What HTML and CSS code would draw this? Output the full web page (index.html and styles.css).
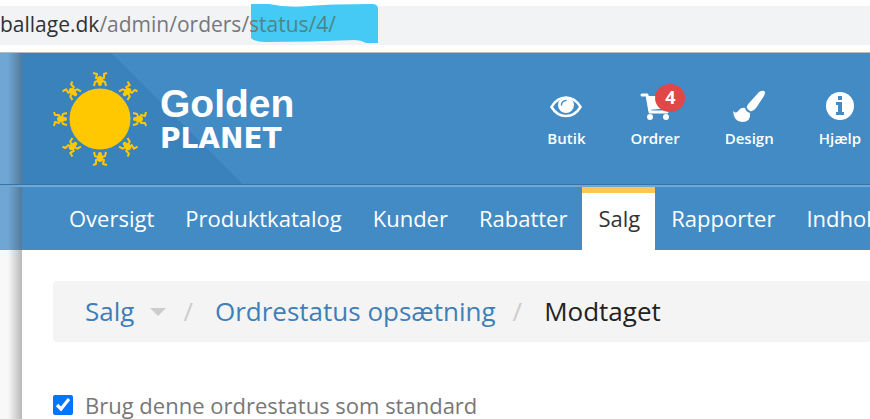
FILE: index.html
```html
<!DOCTYPE html>
<html lang="da">
	<head>
		<meta charset="utf-8">
		<title>Modtaget - Ordrestatus opsætning</title>
		<link rel="stylesheet" href="styles.css">
	</head>

	<body>
		<div class="browser">
			<div class="address">
				<svg class="marker" viewBox="0 0 127 39" width="127" height="39"><path d="M0 0H18Q36 4 58 2T121 0Q127 0 127 5V39H115Q110 36 104 36Q60 38 14 38Q4 38 0 34Z" fill="#45c9f5"/></svg>
				<span class="host">ballage.dk</span><span>/admin/orders/s</span><span class="marked">tatus/4/</span>
			</div>
		</div>

		<header class="row masthead">
			<div class="masthead-inner">
				<a class="logo" href="#">
					<svg class="sun" viewBox="-48 -48 96 96" width="96" height="96">
						<defs>
							<g id="man" fill="none" stroke="#ffc800" stroke-width="2" stroke-linejoin="round">
								<path d="M-6 -33L-5 -37L0 -39L5 -37L6 -33"/>
								<path d="M0 -40L-4 -41L-3 -45L-7 -46M0 -40L4 -41L4 -45L7 -46"/>
								<ellipse cy="-39" rx="3" ry="4" fill="#ffc800" stroke="none"/>
								<circle cy="-35" r="2" fill="#ffc800" stroke="none"/>
							</g>
						</defs>
						<circle r="30.500" fill="#ffc800"/>
						<use href="#man"/>
						<use href="#man" transform="rotate(45)"/>
						<use href="#man" transform="rotate(90)"/>
						<use href="#man" transform="rotate(135)"/>
						<use href="#man" transform="rotate(180)"/>
						<use href="#man" transform="rotate(225)"/>
						<use href="#man" transform="rotate(270)"/>
						<use href="#man" transform="rotate(315)"/>
					</svg>
					<span class="logo-text">
						<span class="golden">Golden</span>
						<span class="planet">PLANET</span>
					</span>
				</a>
				<div class="shortcuts">
					<a href="#">
						<svg viewBox="0 0 32 32" width="32" height="32">
							<path d="M1.500 17Q7 7.500 16 7.500T30.500 17Q25 26 16 26T1.500 17Z" fill="none" stroke="#fff" stroke-width="2.500"/>
							<circle cx="16" cy="15" r="8" fill="#fff"/>
							<path d="M11.500 15A4.500 4.500 0 0 1 16 10.500" fill="none" stroke="#428bc5" stroke-width="1.400" stroke-linecap="round"/>
						</svg>
						Butik
					</a>
					<a href="#">
						<svg viewBox="0 0 32 32" width="32" height="32">
							<path d="M3 5H8L11 22H28" fill="none" stroke="#fff" stroke-width="3" stroke-linecap="round" stroke-linejoin="round"/>
							<path d="M8 6H29V18L10 20Z" fill="#fff"/>
							<circle cx="11" cy="27" r="3" fill="#fff"/>
							<circle cx="27" cy="27" r="3" fill="#fff"/>
						</svg>
						<span class="badge">4</span>
						Ordrer
					</a>
					<a href="#">
						<svg viewBox="0 0 32 32" width="32" height="32">
							<path d="M28 1Q31 0 32 2Q32 4 31 6L23 18Q20 22 17 21Q13 19 14 16Q15 14 17 12L26 2Z" fill="#fff"/>
							<path d="M12 18Q13 22 17 23Q18 32 9 32Q1 32 0 21Q3 24 5 21Q8 17 12 18Z" fill="#fff"/>
						</svg>
						Design
					</a>
					<a href="#">
						<svg viewBox="0 0 32 32" width="32" height="32">
							<circle cx="16" cy="16" r="14" fill="#fff"/>
							<path d="M14 6H18V10H14ZM12 12H18V22H20V25H12V22H14V15H12Z" fill="#428bc5"/>
						</svg>
						Hjælp
					</a>
				</div>
			</div>
		</header>

		<nav class="row menu">
			<a href="#">Oversigt</a>
			<a href="#">Produktkatalog</a>
			<a href="#">Kunder</a>
			<a href="#">Rabatter</a>
			<a href="#" class="active">Salg</a>
			<a href="#">Rapporter</a>
			<a href="#">Indhold</a>
		</nav>

		<main class="row content">
			<div class="content-inner">
				<div class="breadcrumb">
					<a href="#">Salg</a>
					<span class="caret"></span>
					<span class="slash">/</span>
					<a href="#">Ordrestatus opsætning</a>
					<span class="slash">/</span>
					<span class="current">Modtaget</span>
				</div>
				<div class="field">
					<input type="checkbox" id="standard" checked>
					<label for="standard">Brug denne ordrestatus som standard</label>
				</div>
			</div>
		</main>
	</body>
</html>
```
FILE: styles.css
```css
*{
  margin: 0;
  padding: 0;
  box-sizing: border-box;
}
html,body{
  height: 100%;
}
body{
  display: flex;
  flex-direction: column;
  overflow: hidden;
  background: #fff;
  font-family: "Open Sans", "Noto Sans", sans-serif;
  font-size: 22px;
  white-space: nowrap;
}
a{
  color: #fff;
  text-decoration: none;
}

/* browser bar */
.browser{
  padding: 6px 0 7px;
  border-bottom: 1px solid #b4bcc4;
}
.address{
  position: relative;
  z-index: 0;
  height: 39px;
  line-height: 36px;
  background: #f1f3f4;
  color: #75787c;
  font-size: 21px;
}
.host{
  color: #303236;
}
.marked{
  color: #4b8787;
}
.marker{
  position: absolute;
  left: 251px;
  top: -2px;
  z-index: -1;
}

/* shared left gutter with the page shadow */
.row{
  padding-left: 22px;
  background: linear-gradient(to right, rgba(0,0,0,0) 8px, rgba(0,0,0,.26)) 0 0 / 22px 100% no-repeat #6fa6d3;
}
.masthead-inner{
  display: flex;
  align-items: center;
  justify-content: space-between;
  height: 131px;
  padding: 0 9px 0 30px;
  background: linear-gradient(45deg, #3a82bc 156px, #428bc5 156px);
}
.masthead{
  border-bottom: 1px solid #3574a8;
}
.logo{
  display: flex;
  align-items: center;
  gap: 12px;
}
.logo-text{
  display: flex;
  flex-direction: column;
}
.golden{
  font: bold 39px/40px "Liberation Sans", sans-serif;
}
.planet{
  font: bold 28px/30px "DejaVu Sans", sans-serif;
}
.shortcuts{
  display: flex;
  gap: 45px;
}
.shortcuts a{
  display: flex;
  flex-direction: column;
  align-items: center;
  gap: 6px;
  position: relative;
  font-size: 15px;
  font-weight: 600;
  line-height: 20px;
}
.badge{
  position: absolute;
  left: 25px;
  top: -6px;
  width: 30px;
  height: 28px;
  border-radius: 50%;
  background: #e04848;
  font-size: 18px;
  font-weight: bold;
  line-height: 27px;
  text-align: center;
}

/* main menu */
.menu{
  display: flex;
  border-top: 2px solid #6fa6d3;
}
.menu a{
  padding: 0 15px 7px 16px;
  border-top: 6px solid #428bc5;
  background: #428bc5;
  line-height: 50px;
}
.menu a:first-child{
  padding-left: 47px;
}
.menu a:last-child{
  flex: 1;
}
.menu .active{
  border-top-color: #ffc84d;
  background: #fff;
  color: #333;
}

/* content */
.content{
  flex: 1;
  background-color: #f8f8f8;
}
.content-inner{
  height: 100%;
  padding: 31px 0 0 31px;
  background: #fff;
}
.breadcrumb{
  display: flex;
  align-items: center;
  padding: 0 32px;
  border-radius: 4px 0 0 4px;
  background: #f4f4f4;
  font-size: 26px;
  line-height: 61px;
}
.breadcrumb a{
  color: #3f7fb8;
}
.caret{
  margin-left: 16px;
  border: 8px solid transparent;
  border-top-color: #ccc;
  border-bottom: 0;
}
.slash{
  margin: 0 22px 0 17px;
  color: #ccc;
}
.current{
  color: #222;
}
.field{
  display: flex;
  align-items: center;
  gap: 12px;
  margin-top: 48px;
  color: #777;
  line-height: 30px;
}
.field input{
  width: 20px;
  height: 20px;
  accent-color: #0075ff;
}
```
